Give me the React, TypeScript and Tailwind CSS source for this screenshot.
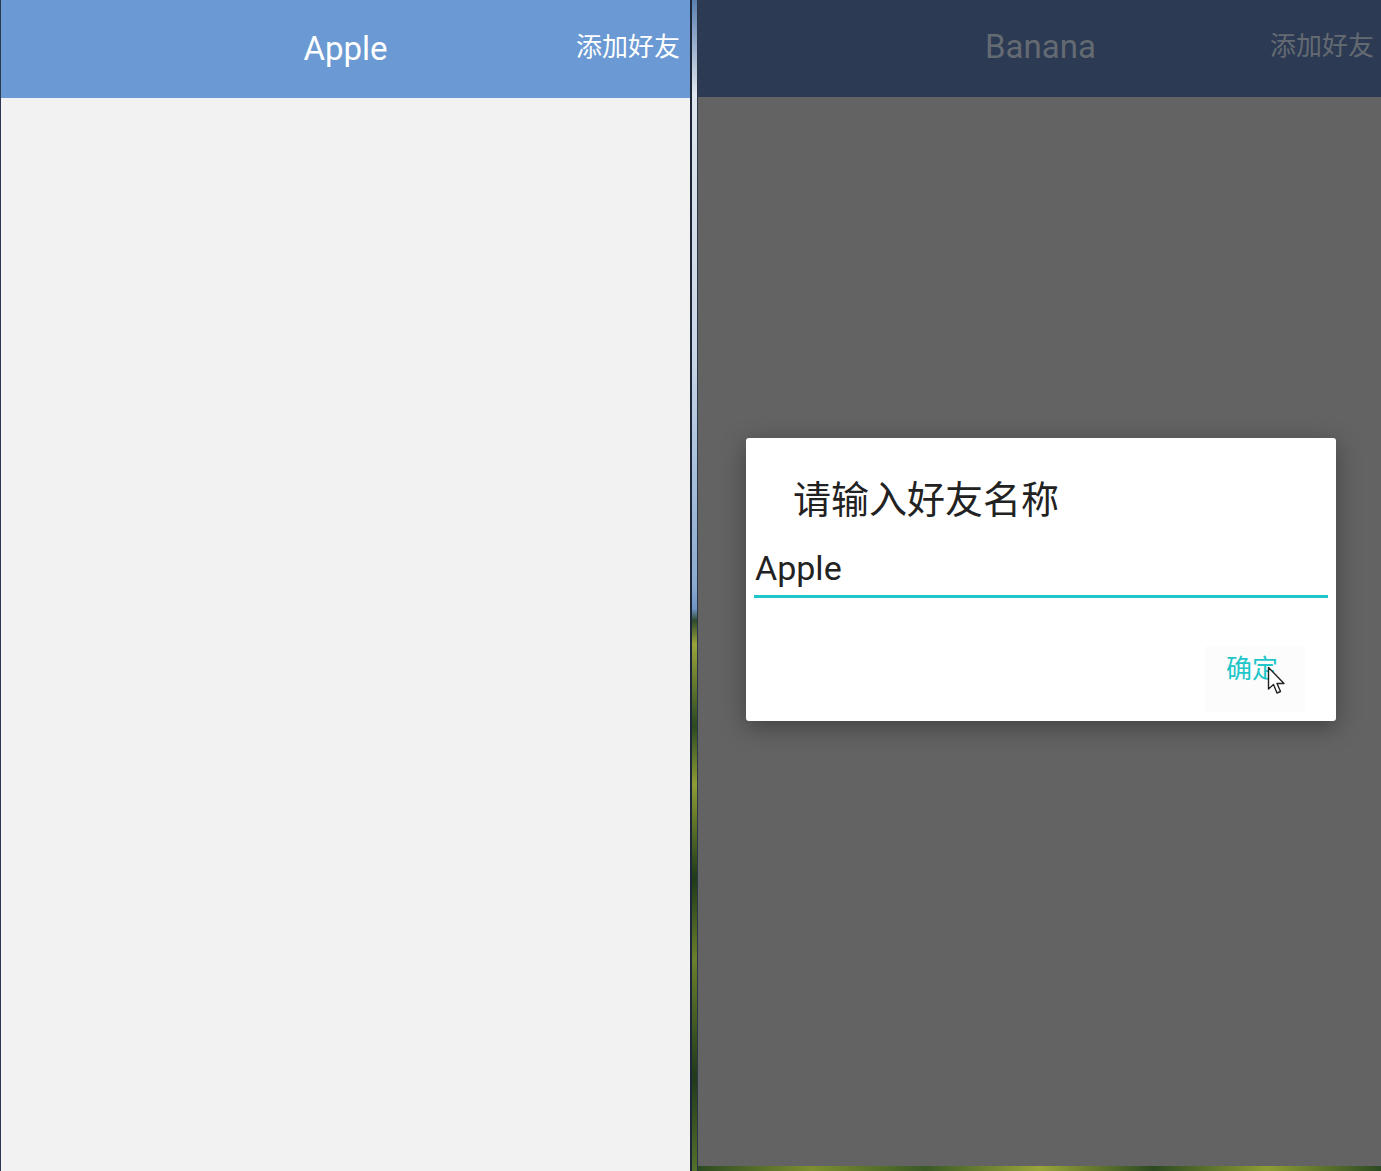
import React from "react";

const FONT = "font-['Roboto','Noto_Sans_CJK_SC',sans-serif]";

function Cursor() {
  return (
    <svg
      className="absolute left-[1267px] top-[666px]"
      width="22"
      height="30"
      viewBox="0 0 22 30"
    >
      <path
        d="M1.5 1.5 L1.5 23 L6.5 18.5 L10 27 L13.5 25.5 L10 17.5 L17 17.5 Z"
        fill="#ffffff"
        stroke="#222222"
        strokeWidth="1.4"
        strokeLinejoin="round"
      />
    </svg>
  );
}

export default function App() {
  return (
    <div className={`relative flex w-[1381px] h-[1171px] overflow-hidden bg-[#1f2a38] ${FONT}`}>
      {/* Left phone */}
      <div className="flex flex-col w-[690px] h-full border-l border-[#2a3850] bg-[#f2f2f2]">
        <div className="relative flex items-center justify-center h-[98px] bg-[#6a99d3]">
          <span className="text-[33px] leading-none text-white pb-[2px]">Apple</span>
          <span className="absolute right-[10px] top-[34px] text-[26px] leading-none text-white">添加好友</span>
        </div>
        <div className="flex-1" />
      </div>

      {/* Divider */}
      <div className="flex w-[8px] h-full">
        <div className="w-[2px] h-full bg-[#1c2636]" />
        <div className="w-[5px] h-full bg-[linear-gradient(to_bottom,#5a7fb0_0%,#dfe6ee_8%,#c9d6e6_30%,#8aaad0_50%,#6f93c4_52%,#2e4a2c_53%,#9aa53a_55%,#2c4a22_62%,#8e9d34_67%,#1f3a1a_75%,#6b7f2c_82%,#203a1c_92%,#55702a_100%)]" />
        <div className="w-[1px] h-full bg-[#2a3546]" />
      </div>

      {/* Right phone */}
      <div className="flex flex-col w-[683px] h-full">
        <div className="flex flex-col flex-1 bg-[#636363]">
          <div className="relative flex items-center justify-center h-[97px] bg-[#2c3b53]">
            <span className="text-[33px] leading-none text-[#646a72] pb-[4px] pl-[2px]">Banana</span>
            <span className="absolute right-[7px] top-[33px] text-[26px] leading-none text-[#646a72]">添加好友</span>
          </div>
          <div className="flex-1" />
        </div>
        <div className="h-[5px] bg-[linear-gradient(to_right,#2c4a22,#7d8f30,#3a5a26,#9aa53a,#2c4a22,#8e9d34,#2c4a22)]" />
      </div>

      {/* Dialog */}
      <div className="absolute left-[746px] top-[438px] w-[590px] h-[283px] bg-white rounded-[3px] shadow-[0_6px_24px_rgba(0,0,0,0.35)]">
        <div className="pl-[47px] pt-[43px] text-[38px] leading-none text-[#222222]">请输入好友名称</div>
        <div className="mx-[8px] mt-[32px]">
          <div className="text-[34px] leading-none text-[#222222] pl-[1px] pb-[10px]">Apple</div>
          <div className="h-[3px] bg-[#1fc6ca]" />
        </div>
        <div className="absolute right-[31px] bottom-[9px] w-[100px] h-[66px] flex items-start justify-center bg-[#fcfcfc]">
          <span className="mt-[10px] text-[26px] leading-none text-[#1fc6ca] pr-[6px]">确定</span>
        </div>
      </div>

      <Cursor />
    </div>
  );
}
